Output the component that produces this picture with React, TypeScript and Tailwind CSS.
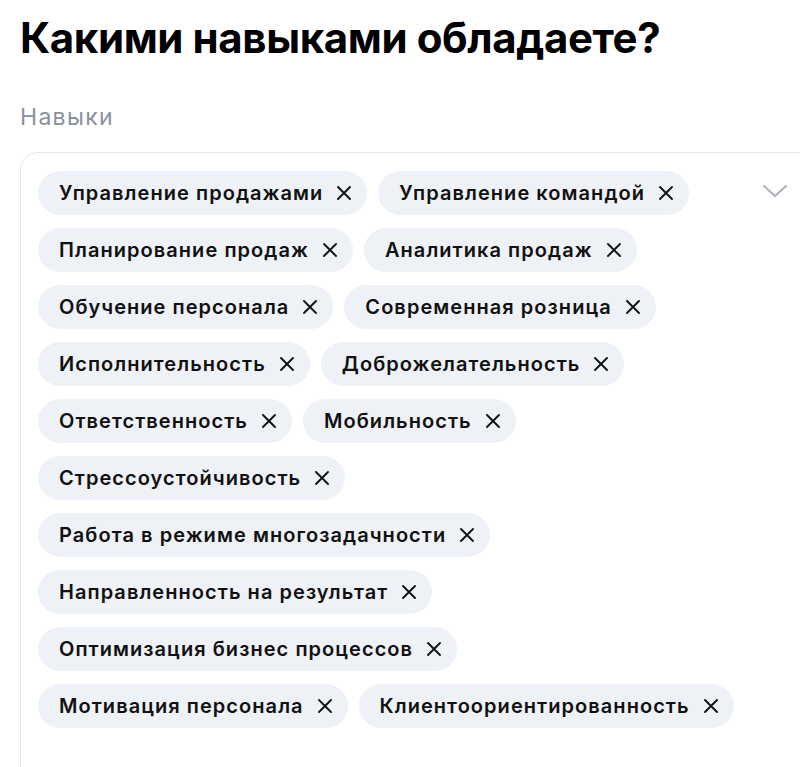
import React from "react";

const skills = [
  "Управление продажами",
  "Управление командой",
  "Планирование продаж",
  "Аналитика продаж",
  "Обучение персонала",
  "Современная розница",
  "Исполнительность",
  "Доброжелательность",
  "Ответственность",
  "Мобильность",
  "Стрессоустойчивость",
  "Работа в режиме многозадачности",
  "Направленность на результат",
  "Оптимизация бизнес процессов",
  "Мотивация персонала",
  "Клиентоориентированность",
];

function XIcon() {
  return (
    <svg width="16" height="16" viewBox="0 0 16 16" fill="none" stroke="#111" strokeWidth="1.9" strokeLinecap="round">
      <path d="M2 2 L14 14 M14 2 L2 14" />
    </svg>
  );
}

export default function App() {
  return (
    <div className="w-[800px] h-[767px] overflow-hidden bg-white" style={{ fontFamily: "Inter, 'Noto Sans', sans-serif" }}>
      <h1 className="pl-[20px] pt-[12px] text-[42px] leading-[52px] font-bold text-black tracking-[-0.4px]">
        Какими навыками обладаете?
      </h1>
      <div className="pl-[20px] mt-[38px] text-[23px] leading-[30px] text-[#89919c] tracking-[1.3px]">Навыки</div>
      <div className="ml-[20px] mt-[20px] w-[820px] h-[700px] border border-[#e3e5e8] rounded-tl-[18px] pt-[18px] pl-[17px] flex">
        <div className="w-[712px] flex flex-wrap gap-x-[11px] gap-y-[13px] content-start">
          {skills.map((s) => (
            <div key={s} className="h-[44px] rounded-full bg-[#eef1f6] pl-[21px] pr-[15px] flex items-center gap-[13px]">
              <span className="text-[20px] font-semibold text-[#111] whitespace-nowrap tracking-[1.05px]">{s}</span>
              <XIcon />
            </div>
          ))}
        </div>
        <div className="pl-[12px] pt-[12px]">
          <svg width="26" height="16" viewBox="0 0 26 16" fill="none" stroke="#a8b0b9" strokeWidth="2" strokeLinecap="round" strokeLinejoin="round">
            <path d="M2 3 L13 13 L24 3" />
          </svg>
        </div>
      </div>
    </div>
  );
}
